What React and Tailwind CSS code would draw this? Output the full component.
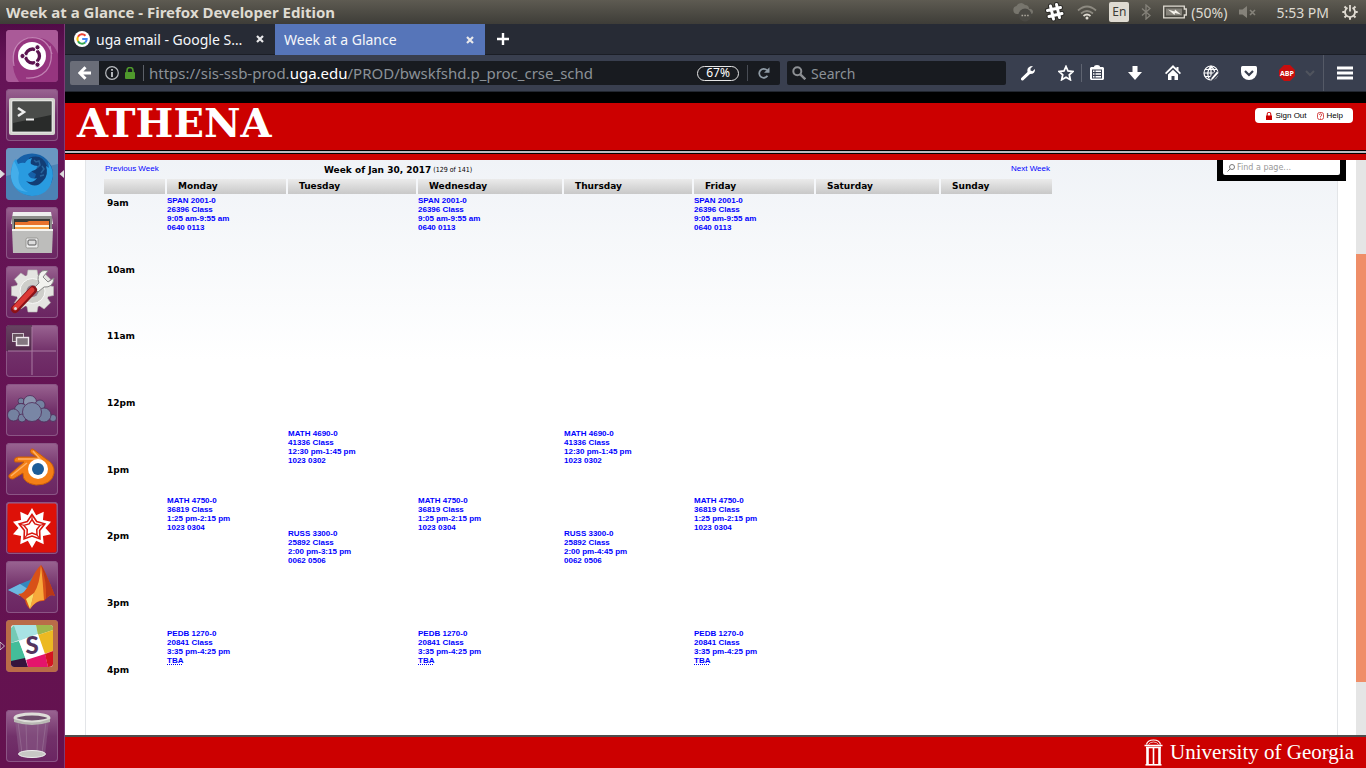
import React from "react";

const DAYS = ["Monday", "Tuesday", "Wednesday", "Thursday", "Friday", "Saturday", "Sunday"];
const HOURS = ["9am", "10am", "11am", "12pm", "1pm", "2pm", "3pm", "4pm"];
const COLUMNS = ["w-[62px]", "w-[121px]", "w-[130px]", "w-[146px]", "w-[130px]", "w-[122px]", "w-[125px]", "w-[112px]"];
const ROW_HEIGHTS = ["h-[33px]", "h-[34px]", "h-[33px]"];

const span = { lines: ["SPAN 2001-0", "26396 Class", "9:05 am-9:55 am"], room: "0640 0113", start: 0, length: 2 };
const math46 = { lines: ["MATH 4690-0", "41336 Class", "12:30 pm-1:45 pm"], room: "1023 0302", start: 7, length: 2 };
const math47 = { lines: ["MATH 4750-0", "36819 Class", "1:25 pm-2:15 pm"], room: "1023 0304", start: 9, length: 2 };
const russTue = { lines: ["RUSS 3300-0", "25892 Class", "2:00 pm-3:15 pm"], room: "0062 0506", start: 10, length: 3 };
const russThu = { lines: ["RUSS 3300-0", "25892 Class", "2:00 pm-4:45 pm"], room: "0062 0506", start: 10, length: 6 };
const pedb = { lines: ["PEDB 1270-0", "20841 Class", "3:35 pm-4:25 pm"], room: "TBA", tba: true, start: 13, length: 2 };

const SCHEDULE = [
  [span, math47, pedb],
  [math46, russTue],
  [span, math47, pedb],
  [math46, russThu],
  [span, math47, pedb],
  [],
  [],
];

function ScheduleCell({ day, slot }) {
  const event = SCHEDULE[day].find((e) => e.start === slot);
  if (event) {
    return (
      <td rowSpan={event.length} className="p-0 pt-0.5 pl-px align-top">
        <a href="#class" className="block font-bold text-[#0000ff]">
          {event.lines.map((line) => (
            <span key={line} className="block whitespace-nowrap">{line}</span>
          ))}
          {event.tba ? (
            <abbr title="To Be Announced" className="underline decoration-dotted">{event.room}</abbr>
          ) : (
            <span className="block">{event.room}</span>
          )}
        </a>
      </td>
    );
  }
  if (SCHEDULE[day].some((e) => slot > e.start && slot < e.start + e.length)) return null;
  return <td className="p-0" />;
}

function Schedule() {
  return (
    <table className="w-[76.8%] table-fixed border-collapse text-left text-[8px] leading-[9px]">
      <colgroup>
        {COLUMNS.map((c, i) => (
          <col key={i} className={c} />
        ))}
      </colgroup>
      <thead>
        <tr className="h-[15px] font-['DejaVu_Sans'] text-[9px]">
          <td className="border-r-2 border-[#f5f7fa] bg-linear-to-b from-[#ebebeb] to-[#c8c8c8] p-0" />
          {DAYS.map((d) => (
            <th key={d} scope="col" className="border-r-2 border-[#f5f7fa] bg-linear-to-b from-[#ebebeb] to-[#c8c8c8] p-0 pl-[11px] font-bold last:border-r-0">
              {d}
            </th>
          ))}
        </tr>
      </thead>
      <tbody>
        {Array.from({ length: 16 }, (_, slot) => (
          <tr key={slot} className={ROW_HEIGHTS[slot % 3]}>
            {slot % 2 === 0 && (
              <th scope="row" rowSpan={2} className="p-0 pt-[5px] pl-[3px] align-top font-['DejaVu_Sans'] text-[9px] font-bold">
                {HOURS[slot / 2]}
              </th>
            )}
            {DAYS.map((d, day) => (
              <ScheduleCell key={d} day={day} slot={slot} />
            ))}
          </tr>
        ))}
      </tbody>
    </table>
  );
}

function TopPanel() {
  return (
    <header className="flex h-6 shrink-0 items-center bg-linear-to-b from-[#5e5b52] to-[#3e3d38] pr-2 pl-1.5 text-[14px] text-[#dfdbd2]">
      <h1 className="flex-1 truncate text-[15px] font-bold">Week at a Glance - Firefox Developer Edition</h1>
      <svg className="mr-[11px] h-5 w-[22px]" viewBox="0 0 22 20">
        <path d="M5 12a4 4 0 0 1-.5-7.9A5 5 0 0 1 13 3a4 4 0 0 1 4 4 3 3 0 0 1 3 5z" fill="#77756d" />
        <circle cx="13" cy="13" r="6.500" fill="#4a4944" />
        <path d="M9.500 13.500h1.600M12.300 13.500h1.600M15.100 13.500h1.600" stroke="#aaa69c" strokeWidth="1.600" />
      </svg>
      <svg className="mr-3 h-5 w-5" viewBox="0 0 20 20">
        <path d="M5.500 4l3 13M11.500 2.500l3 13M2.500 8.500l13-3M4 14.500l13-3" stroke="#2b2a27" strokeWidth="5" strokeLinecap="round" />
        <path d="M5.500 4l3 13M11.500 2.500l3 13M2.500 8.500l13-3M4 14.500l13-3" stroke="#fff" strokeWidth="3" strokeLinecap="round" />
      </svg>
      <svg className="mr-3 h-4 w-5" viewBox="0 0 20 16" fill="none" strokeWidth="1.700">
        <path d="M1 6.500q9-8 18 0M4 9.500q6-5 12 0" stroke="#8d8a81" />
        <path d="M6.500 12q3.500-3 7 0" stroke="#dfdbd2" />
        <circle cx="10" cy="14" r="1.500" fill="#dfdbd2" />
      </svg>
      <span className="mr-3 flex h-5 w-5 items-center justify-center rounded-xs bg-[#dfdbd2] text-[12px] text-[#3c3b37]">En</span>
      <svg className="mr-3 h-4 w-[10px]" viewBox="0 0 10 16" fill="none" stroke="#85827a" strokeWidth="1.300">
        <path d="M1 4.500l8 7-4 3.500V1l4 3.500-8 7" />
      </svg>
      <svg className="mr-1 h-3.5 w-6" viewBox="0 0 24 14">
        <path d="M.7 1.200h20.600v2.800h2v6h-2v2.800H.7z" fill="none" stroke="#dfdbd2" strokeWidth="1.300" />
        <path d="M3 3.500h16v7H3z" fill="#85827a" />
        <path d="M5 4.500l6.500 2 .5-2L18 9.500l-6-1.500-.5 2z" fill="#f4f1ea" />
      </svg>
      <span className="mr-3">(50%)</span>
      <svg className="mr-[19px] h-3 w-[18px]" viewBox="0 0 18 12" fill="#85827a">
        <path d="M0 3.500h3.500L8 0v12L3.500 8.500H0z" />
        <path d="M11 4l5 5M16 4l-5 5" stroke="#85827a" strokeWidth="1.600" />
      </svg>
      <span className="mr-[13px]">5:53 PM</span>
      <svg className="h-4 w-4" viewBox="0 0 16 16" fill="none" stroke="#dfdbd2">
        <path d="M5.500 3.700a5 5 0 1 0 5 0" strokeWidth="1.800" />
        <path d="M8 1v6.500" strokeWidth="1.800" />
        <path d="M.3 8h2.500M13.200 8h2.500M2.500 2.500l1.900 1.900M13.500 2.500l-1.900 1.900M2.500 13.500l1.900-1.900M13.500 13.500l-1.900-1.900M8 13.200v2.500" strokeWidth="2" />
      </svg>
    </header>
  );
}

function starPoints(count, outer, inner) {
  return Array.from({ length: count * 2 }, (_, i) => {
    const radius = i % 2 === 0 ? outer : inner;
    const angle = (Math.PI * i) / count - Math.PI / 2;
    return `${(26 + radius * Math.cos(angle)).toFixed(2)},${(26 + radius * Math.sin(angle)).toFixed(2)}`;
  }).join(" ");
}

const ICONS = {
  Ubuntu: (
    <>
      <rect width="52" height="52" rx="4" fill="#96357f" />
      <path d="M0 4q0-4 4-4h44q4 0 4 4v20Q46 8 28 7 8 8 7 30 6 42 13 52H4q-4 0-4-4z" fill="#c993bd" opacity=".4" />
      <path d="M44 16q4 16-4 25-8 8-20 7M8 36Q4 14 22 8q18-3 24 16" fill="none" stroke="#dcb3d3" strokeWidth="1.200" opacity=".6" />
      <circle cx="26" cy="26" r="14" fill="#fff" />
      <circle cx="26.500" cy="26" r="7" fill="none" stroke="#5c1350" strokeWidth="3.300" />
      <path d="M26.500 26l-12 0M26.500 26l6-10.400M26.500 26l6 10.400" stroke="#fff" strokeWidth="1.500" />
      <g fill="#5c1350" stroke="#fff" strokeWidth="1">
        <circle cx="16.500" cy="26" r="2.600" />
        <circle cx="31.500" cy="17.300" r="2.600" />
        <circle cx="31.500" cy="34.700" r="2.600" />
      </g>
    </>
  ),
  Terminal: (
    <>
      <rect x="3" y="9" width="46" height="37" rx="2" fill="#d4d4cf" />
      <rect x="6" y="12" width="40" height="31" fill="#292b2a" stroke="#fff" strokeWidth=".7" />
      <path d="M7 13h38v13L7 34z" fill="#595b59" opacity=".7" />
      <path d="M12 19l6 4-6 4" fill="none" stroke="#eee" strokeWidth="2.500" />
      <path d="M20 30.500h8" stroke="#eee" strokeWidth="2" />
    </>
  ),
  Firefox: (
    <>
      <rect width="52" height="52" rx="4" fill="#4c83b5" />
      <path d="M0 4q0-4 4-4h44q4 0 4 4v12L0 28z" fill="#87acce" opacity=".5" />
      <circle cx="26" cy="26.500" r="21" fill="#1560a8" />
      <path d="M23 10q13-5 18 8 4 12-7 20-11 4-15-5 10 1 11-7-5-2-8-7z" fill="#123d75" />
      <path d="M8 13l2-2 2 5q4-2 7-1 2-4 7-5-2 4-1 6 3 2 7 2-1 4-6 5l-4 3q2 6 9 4-4 6-11 3 9 9 17 0 6-6 3-15l3 2-1-6q7 9 4 18-3 15-20 16Q8 46 5 30q-1-9 3-17z" fill="#299be0" />
      <path d="M8 13q4 7 5 12-3 13 9 19Q7 43 5 29q0-9 3-16z" fill="#53b9ef" opacity=".65" />
      <path d="M28 12l2 2 3-1 1 4-3 3M36 18l2 3-3 4M34 28l4-1" fill="none" stroke="#28649b" strokeWidth="1.500" />
    </>
  ),
  Files: (
    <>
      <path d="M7 5h38l2 12H5z" fill="#eee" />
      <path d="M6 9h40v14H6z" fill="#8b8c89" />
      <path d="M8 12h36v12H8z" fill="#383a37" />
      <path d="M9 15h12l2-1h20v10H9z" fill="#e9732c" />
      <path d="M9 18h34v5H9z" fill="#fff5dc" />
      <path d="M9 20h34v3H9z" fill="#f4a044" />
      <path d="M6 22h41l-1 24H7z" fill="#bdbdbb" />
      <path d="M6 22h41v2H6z" fill="#f3f3f1" />
      <rect x="20" y="31" width="12" height="10" rx="1.500" fill="#eee" stroke="#969693" />
      <rect x="22" y="33" width="8" height="5" rx="1" fill="#ddd" stroke="#555" />
    </>
  ),
  Settings: (
    <>
      <g fill="#e4e4e1" stroke="#b5b5b2" strokeWidth=".6">
        {[0, 45, 90, 135, 180, 225, 270, 315].map((a) => (
          <path key={a} d="M20.500 12L22 4h9l1.500 8z" transform={`rotate(${a} 26.500 25)`} />
        ))}
      </g>
      <circle cx="26.500" cy="25" r="16.500" fill="#e4e4e1" />
      <circle cx="26.500" cy="25" r="12.500" fill="#cececa" stroke="#f8f8f7" />
      <circle cx="26.500" cy="25" r="6" fill="#8f7d8d" />
      <path d="M36 5q-6 5-3 12l-5 5 4 4 6-5q9 1 10-9l-6 4-5-5 5-6q-3-1-6 0z" fill="#f2f2ef" stroke="#888" />
      <path d="M9 43l18-19" stroke="#8b1217" strokeWidth="8" strokeLinecap="round" />
      <path d="M9 42l17-18" stroke="#dc3a36" strokeWidth="5" strokeLinecap="round" />
      <circle cx="9.500" cy="42.500" r="1.500" fill="#ddd" />
    </>
  ),
  Workspaces: (
    <>
      <path d="M0 4q0-4 4-4h22v26H0z" fill="#362232" opacity=".5" />
      <path d="M26 2v48M2 26h48" stroke="#a87aa1" strokeWidth="1" />
      <rect x="6.500" y="8.500" width="11" height="8" fill="#67545f" stroke="#ccc1c9" />
      <rect x="10.500" y="12.500" width="12" height="8" fill="#837780" stroke="#f0e9ee" strokeWidth="1.400" />
    </>
  ),
  ownCloud: (
    <g fill="#7481a0" stroke="#4e2b58" strokeWidth=".8">
      <circle cx="15" cy="17" r="3" />
      <circle cx="24" cy="18" r="6.500" fill="#8a94ae" />
      <circle cx="34" cy="21" r="5" />
      <circle cx="15" cy="26" r="6.500" />
      <circle cx="7.500" cy="31" r="6" />
      <circle cx="16" cy="34" r="4" />
      <circle cx="47" cy="34" r="3.500" />
      <circle cx="38" cy="31" r="7" />
      <circle cx="26" cy="28" r="9.500" fill="#7986a5" />
    </g>
  ),
  Blender: (
    <>
      <path d="M3 32q-1 4 4 4l10-6q-1 10 13 12 16 0 18-12 1-9-8-14L27 6q-4 0-2 4l6 4H12q-5 1-3 5h9z" fill="#f47f16" stroke="#c95e09" />
      <path d="M5 33l16-13M12 16h22L27 8" fill="none" stroke="#ffb164" strokeWidth="1.500" />
      <circle cx="32" cy="26" r="10" fill="#fff" />
      <circle cx="32" cy="26" r="6" fill="#1c5c98" />
    </>
  ),
  Mathematica: (
    <>
      <rect x="1.500" y="1.500" width="49" height="49" rx="2" fill="#dd1108" />
      <polygon points={starPoints(10, 20, 13.5)} fill="#fff" />
      <polygon points={starPoints(5, 13.5, 8)} fill="#fff" stroke="#d9160e" strokeWidth="1.600" />
      <polygon points={starPoints(5, 8.5, 5)} fill="#fff" stroke="#d9160e" strokeWidth="1.500" />
      <path d="M26 13v4M38.400 22l-4 1.300M33.600 36.500l-2.400-3.300M18.400 36.500l2.400-3.300M13.600 22l4 1.300" stroke="#d9160e" strokeWidth="1.200" />
    </>
  ),
  Matlab: (
    <>
      <path d="M2 29l12-6 10-4 10-13-5 22-9 9-8-4z" fill="#3487bd" />
      <path d="M2 29l12-6 8 5-8 7z" fill="#6cb8e0" />
      <path d="M12 33q7 0 11-10Q30 8 35 4q3 3 14 31-5-3-11 5-8-1-14 8-4-3-5-9z" fill="#d85118" />
      <path d="M35 4q-1 19-7 28l-4 16q6-9 14-9Q37 22 35 4z" fill="#f8a83b" />
      <path d="M35 4q3 3 14 31-5-3-9 3Q41 20 35 4z" fill="#b93816" />
      <path d="M20 38l8-6-4 16z" fill="#f7dc68" />
    </>
  ),
  Slack: (
    <>
      <rect width="52" height="52" rx="4" fill="#b96c48" />
      <rect x="5" y="5" width="42" height="42" rx="3" fill="#f8f4f6" />
      <path d="M8 5h22l2 9-19 7z" fill="#a8e3e4" />
      <path d="M30 5h14q3 0 3 3v2l-15 5z" fill="#9eb74d" />
      <path d="M32 15l15-5v21l-9 3z" fill="#ecb922" />
      <path d="M5 8l3-3 5 15-8 3z" fill="#74c9b5" />
      <path d="M5 23l8-2 7 18-15 5z" fill="#43bd99" />
      <path d="M5 41l14-3 3 9H8q-3 0-3-3z" fill="#35143c" />
      <path d="M20 39l19-6 3 14H22z" fill="#e4146c" />
      <path d="M39 34l8-3v13q0 3-5 3z" fill="#d51420" />
      <path d="M13 21l19-7 7 20-19 6z" fill="#fff" />
      <text x="26" y="34" textAnchor="middle" fontSize="24" fontWeight="900" fontFamily="Lato, sans-serif" fill="#54345f">S</text>
    </>
  ),
  Trash: (
    <>
      <path d="M9 10l4 35q13 5 26 0l4-35z" fill="#8d608a" opacity=".55" />
      <path d="M12 12l4 31M40 12l-4 31M20 14l1 29M32 14l-1 29" stroke="#aa8ca8" opacity=".4" />
      <ellipse cx="26" cy="44" rx="13.500" ry="3.500" fill="#c8c8c5" stroke="#eee" />
      <ellipse cx="26" cy="8" rx="17" ry="4" fill="#6d4d6b" stroke="#deded9" strokeWidth="3" />
      <path d="M8 9v3q18 6 36 0V9q-18 7-36 0z" fill="#b9b9b4" />
    </>
  ),
};

function Launcher() {
  return (
    <nav aria-label="Launcher" className="flex w-[65px] shrink-0 flex-col gap-[7px] border-r border-[#7d3b76] bg-linear-to-b from-[#510b47] via-[#651457] via-5% to-[#64124f] px-1.5 pt-1.5 pb-1.5">
      {Object.entries(ICONS).map(([name, icon]) => (
        <button
          key={name}
          type="button"
          aria-label={name}
          className="relative h-[52px] w-[52px] shrink-0 rounded-sm bg-linear-to-b from-[#9a6492] via-[#72316a] via-50% to-[#6b2562] ring-1 ring-[#8b5585] ring-inset last:mt-auto"
        >
          <svg viewBox="0 0 52 52" className="h-full w-full">{icon}</svg>
          {(name === "Firefox" || name === "Slack") && (
            <svg viewBox="0 0 5 8" className="absolute top-[22px] -left-1.5 h-2 w-[5px]">
              <path d="M0 0l4.500 4L0 8z" fill={name === "Firefox" ? "#ddd" : "none"} stroke="#ddd" strokeWidth=".8" />
            </svg>
          )}
          {name === "Firefox" && (
            <svg viewBox="0 0 5 8" className="absolute top-[22px] -right-1.5 h-2 w-[5px]">
              <path d="M5 0L.5 4 5 8z" fill="#ddd" />
            </svg>
          )}
        </button>
      ))}
    </nav>
  );
}

function CloseIcon() {
  return (
    <svg className="h-2 w-2" viewBox="0 0 8 8">
      <path d="M1 1l6 6M7 1L1 7" stroke="#e8e8ea" strokeWidth="2.200" />
    </svg>
  );
}

function Tabs() {
  return (
    <div className="flex h-[31px] shrink-0 items-stretch bg-[#272b35] text-[14px] text-[#f5f7fa]">
      <div className="flex w-[210px] items-center border-b border-[#1b1e26] pr-[11px] pl-[9px]">
        <svg className="mr-1.5 h-4 w-4" viewBox="0 0 16 16" fill="none" strokeWidth="2">
          <circle cx="8" cy="8" r="8" fill="#fff" />
          <path d="M11.500 4.700A4.700 4.700 0 0 0 4 5.700" stroke="#ea4335" />
          <path d="M4 5.700a4.700 4.700 0 0 0 0 4.600" stroke="#fbbc05" />
          <path d="M4 10.300a4.700 4.700 0 0 0 7.200 1.200" stroke="#34a853" />
          <path d="M8.200 8h4.500a4.600 4.600 0 0 1-1.500 3.500" stroke="#4285f4" />
        </svg>
        <span className="flex-1 truncate">uga email - Google S…</span>
        <button type="button" aria-label="Close tab"><CloseIcon /></button>
      </div>
      <div className="flex w-[210px] items-center bg-[#5675b9] pr-[11px] pl-[9px]">
        <span className="flex-1 truncate">Week at a Glance</span>
        <button type="button" aria-label="Close tab"><CloseIcon /></button>
      </div>
      <button type="button" aria-label="New tab" className="flex flex-1 items-center border-b border-[#1b1e26] pl-3">
        <svg className="h-3 w-3" viewBox="0 0 12 12">
          <path d="M6 0v12M0 6h12" stroke="#fff" strokeWidth="2.400" />
        </svg>
      </button>
    </div>
  );
}

function ToolButton({ label, children }) {
  return (
    <button type="button" aria-label={label} className="shrink-0">
      <svg className="h-4 w-4" viewBox="0 0 16 16" fill="#fff">{children}</svg>
    </button>
  );
}

function Toolbar() {
  return (
    <div className="flex h-[37px] shrink-0 items-center border-b border-[#22262f] bg-[#393f4f] pr-[13px] pl-[5px] text-[14px]">
      <button type="button" aria-label="Back" className="flex h-6 w-[29px] shrink-0 items-center justify-center rounded-l-xs bg-[#6a6d78]">
        <svg className="h-3.5 w-3.5" viewBox="0 0 14 14">
          <path d="M7.500 1.200L1.800 7l5.700 5.800M2 7h11" fill="none" stroke="#fff" strokeWidth="3" />
        </svg>
      </button>
      <div className="flex h-6 min-w-0 flex-[681] items-center rounded-r-xs bg-[#181b20] pr-2.5 pl-1.5">
        <svg className="mr-1.5 h-3.5 w-3.5 shrink-0" viewBox="0 0 14 14">
          <circle cx="7" cy="7" r="6.300" fill="none" stroke="#b9bcc0" strokeWidth="1.200" />
          <path d="M7 3v1.700M7 6v5" stroke="#dcdfe3" strokeWidth="1.600" />
        </svg>
        <svg className="mr-2 h-3 w-2.5 shrink-0" viewBox="0 0 10 12">
          <path d="M2 6V3.500a3 3 0 0 1 6 0V6" fill="none" stroke="#4f9a2c" strokeWidth="1.600" />
          <rect y="5" width="10" height="7" rx="1" fill="#4f9a2c" />
        </svg>
        <span className="mr-[5px] h-4 w-px shrink-0 bg-[#5c6068]" />
        <span className="flex-1 truncate text-[15px] text-[#8b9197]">
          https://sis-ssb-prod.<span className="text-white">uga.edu</span>/PROD/bwskfshd.p_proc_crse_schd
        </span>
        <button type="button" className="mr-2 flex h-[15px] w-[42px] shrink-0 items-center justify-center rounded-full border border-[#e6e6e6] text-[12px] leading-3 text-white">67%</button>
        <span className="mr-2.5 h-4 w-px shrink-0 bg-[#484c54]" />
        <button type="button" aria-label="Reload" className="shrink-0">
          <svg className="h-3 w-3" viewBox="0 0 12 12">
            <path d="M9.500 8.800A4.500 4.500 0 1 1 9 3.200" fill="none" stroke="#8f9ba5" strokeWidth="1.800" />
            <path d="M11.500.3v5.500H6z" fill="#8f9ba5" />
          </svg>
        </button>
      </div>
      <label className="ml-[7px] flex h-6 min-w-0 flex-[219] items-center rounded-xs bg-[#181b20] pl-[5px]">
        <svg className="mr-[5px] h-3.5 w-3.5 shrink-0" viewBox="0 0 14 14" fill="none" stroke="#8d9094">
          <circle cx="5.300" cy="5.300" r="4" strokeWidth="2" />
          <path d="M8.300 8.300l5 5" strokeWidth="2.400" />
        </svg>
        <input type="text" aria-label="Search" placeholder="Search" className="w-full min-w-0 bg-transparent placeholder:text-[#8b9197]" />
      </label>
      <div className="ml-3.5 flex shrink-0 items-center">
        <ToolButton label="Developer tools">
          <path d="M1 13.200L7.500 7Q6.500 3 10.500 1.200L13 1 10.500 3.500v2l2 .8 2.500-2.300Q15.500 9 10 9L3 15.500Q.5 16 1 13.200z" />
        </ToolButton>
        <span className="w-[22px]" />
        <ToolButton label="Bookmark this page">
          <path d="M8 1.500l2 4.500 5 .5-3.700 3.300 1 4.900L8 12.200l-4.300 2.500 1-4.900L1 6.500 6 6z" fill="none" stroke="#fff" strokeWidth="1.800" />
        </ToolButton>
        <span className="mx-[7px] h-[18px] w-px bg-[#5f6471]" />
        <ToolButton label="Bookmarks">
          <path d="M5 2q0-2 3-2t3 2h3l1 1v11l-1 1H2l-1-1V3l1-1z" />
          <path d="M3 4.500h10v9H3z" fill="#393f4f" />
          <path d="M4 6.300h1.500M4 9h1.500M4 11.700h1.500M6.500 6.300H12M6.500 9H12M6.500 11.700H12" stroke="#fff" strokeWidth="1.400" />
        </ToolButton>
        <span className="w-[22px]" />
        <ToolButton label="Downloads"><path d="M5.500 1h5v6h4.500L8 15 1 7h4.500z" /></ToolButton>
        <span className="w-[22px]" />
        <ToolButton label="Home"><path d="M8 0L0 8l1.200 1.200L8 2.800l6.800 6.400L16 8l-2.500-2.500V2h-2v1.500zM3 9.500l5-4.700 5 4.700V15H9.500v-4h-3v4H3z" /></ToolButton>
        <span className="w-[22px]" />
        <ToolButton label="Web editor">
          <g fill="none" stroke="#fff" strokeWidth="1.200">
            <circle cx="8" cy="8" r="7" />
            <path d="M1 8h14M2 4.500h12M2 11.500h8M8 1v14M8 1Q2 8 7 15M8 1q6 6 3 11" />
          </g>
          <path d="M15 7l-7 8" stroke="#393f4f" strokeWidth="5" />
          <path d="M15.500 8L10 14l-2 1.500.5-2.500L14 6.500z" />
        </ToolButton>
        <span className="w-[22px]" />
        <ToolButton label="Pocket">
          <path d="M1.500 1h13Q16 1 16 2.500V7a8 8 0 0 1-16 0V2.500Q0 1 1.500 1z" />
          <path d="M4 6l4 4 4-4" fill="none" stroke="#393f4f" strokeWidth="2.200" />
        </ToolButton>
        <span className="w-[22px]" />
        <ToolButton label="Adblock Plus">
          <path d="M5 0h6l5 5v6l-5 5H5l-5-5V5z" fill="#c70d0d" />
          <text x="8" y="10.700" textAnchor="middle" fontSize="7" fontWeight="bold" fontFamily="Open Sans, sans-serif">ABP</text>
        </ToolButton>
        <svg className="ml-2.5 h-2 w-2.5" viewBox="0 0 10 8"><path d="M1 2l4 4 4-4" fill="none" stroke="#50545e" strokeWidth="2" /></svg>
        <span className="mr-[13px] ml-2 h-9 w-px bg-[#555a67]" />
        <ToolButton label="Menu"><path d="M0 1.500h16v3H0zM0 6.500h16v3H0zM0 11.500h16v3H0z" /></ToolButton>
      </div>
    </div>
  );
}

function Banner() {
  return (
    <div className="shrink-0">
      <div className="h-[11px] bg-black" />
      <div className="flex h-[47px] items-start justify-between bg-[#cc0000] pr-[13px] pl-3">
        <div className="font-['DejaVu_Serif'] text-[40px] leading-10 font-bold text-white">ATHENA</div>
        <div className="mt-[5px] flex h-[15px] items-center gap-2.5 rounded-sm bg-white pr-2.5 pl-[11px] font-['Liberation_Sans'] text-[8px] text-black">
          <a href="#signout" className="flex items-center gap-[3px]">
            <svg className="h-2 w-1.5" viewBox="0 0 6 8">
              <path d="M1.200 4V2a1.800 1.800 0 0 1 3.600 0v2" fill="none" stroke="#c00" />
              <path d="M0 3.500h6V8H0z" fill="#c00" />
            </svg>
            Sign Out
          </a>
          <a href="#help" className="flex items-center gap-[3px]">
            <svg className="h-2 w-[7px]" viewBox="0 0 7 8" fill="none" stroke="#c22" strokeWidth=".8">
              <rect x=".5" y=".5" width="6" height="7" rx="2" />
              <path d="M2.200 3q0-1.200 1.300-1.200T4.800 3q0 .8-1.300 1.300V5M3.500 5.700v.9" />
            </svg>
            Help
          </a>
        </div>
      </div>
      <div className="h-1 border-y border-black bg-[#bbbbc3]" />
      <div className="h-1.5 bg-[#cc0000]" />
    </div>
  );
}

function Page() {
  return (
    <main className="relative flex min-h-0 flex-1 bg-white font-['Liberation_Sans'] text-black">
      <div className="ml-5 min-w-0 flex-1 overflow-hidden border-x border-[#e3e5e8] bg-linear-to-b from-[#f0f3f7] to-white to-[200px] pl-[18px]">
        <div className="flex h-[19px] w-[76.8%] items-start pt-1 text-[8px] leading-[9px]">
          <a href="#previous" className="flex-[22] pl-px text-[#0000ff]">Previous Week</a>
          <h2 className="flex flex-[69] items-center gap-0.5">
            <span className="font-['DejaVu_Sans'] text-[9px] leading-3 font-bold">Week of Jan 30, 2017</span>
            <span className="font-['DejaVu_Sans_Condensed'] text-[7px] leading-3">(129 of 141)</span>
          </h2>
          <a href="#next" className="pr-px text-[#0000ff]">Next Week</a>
        </div>
        <Schedule />
      </div>
      <div className="absolute top-0 right-5 flex h-[21px] w-[129px] items-start bg-black px-1.5">
        <label className="flex h-[15px] w-full items-center rounded-b-xs bg-white pl-1">
          <svg className="mr-0.5 h-2 w-2 shrink-0" viewBox="0 0 8 8" fill="none" stroke="#777">
            <circle cx="5" cy="3" r="2.500" />
            <path d="M3.200 4.800L.5 7.500" />
          </svg>
          <input type="text" aria-label="Find a page" placeholder="Find a page..." className="w-full min-w-0 font-['DejaVu_Sans'] text-[8px] placeholder:text-[#999]" />
        </label>
      </div>
      <div className="ml-[18px] w-2.5 shrink-0 bg-[#e5e5e5] pt-[94px]">
        <div className="h-[428px] bg-[#ef8e68]" />
      </div>
    </main>
  );
}

function Footer() {
  return (
    <footer className="flex h-[33px] shrink-0 items-center justify-end gap-1.5 border-t-2 border-[#4d4d4d] bg-[#cc0000] pr-3 text-white">
      <svg className="h-7 w-5" viewBox="0 0 20 28" fill="none" stroke="#fff">
        <path d="M2.500 5.500Q3.500 1 9.500 1t7 4.500" strokeWidth="1.200" />
        <path d="M4.500 5.500q1.500-2.500 5-2.500t5 2.500" strokeWidth=".7" />
        <path d="M.5 6.500h18M2 8.500h15" strokeWidth="1.300" />
        <path d="M3.500 8v17M15.500 8v17" strokeWidth="2.600" />
        <path d="M9.500 8v17" strokeWidth="1.600" />
        <path d="M1.500 25.800h16" strokeWidth="1.600" />
      </svg>
      <span className="font-['Liberation_Serif'] text-[21px]">University of Georgia</span>
    </footer>
  );
}

export default function App() {
  return (
    <div className="flex h-screen flex-col overflow-hidden font-['Noto_Sans',sans-serif]">
      <TopPanel />
      <div className="flex min-h-0 flex-1">
        <Launcher />
        <div className="flex min-w-0 flex-1 flex-col">
          <Tabs />
          <Toolbar />
          <Banner />
          <Page />
          <Footer />
        </div>
      </div>
    </div>
  );
}
